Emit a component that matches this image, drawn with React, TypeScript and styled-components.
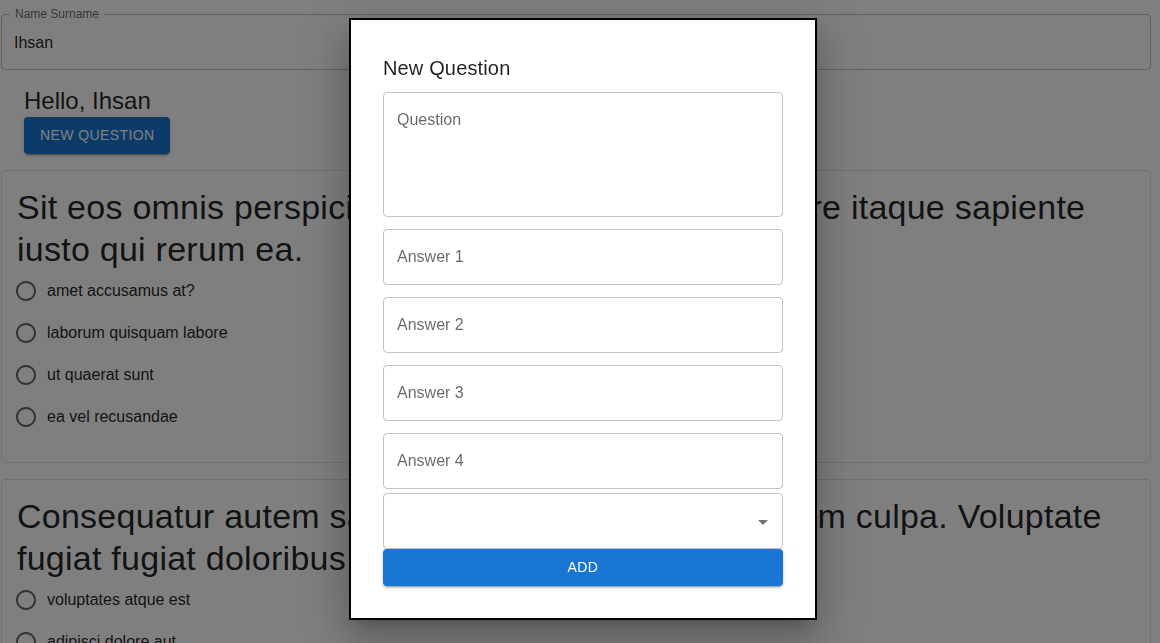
import React from "react";
import styled, { createGlobalStyle } from "styled-components";

const GlobalStyle = createGlobalStyle`
  html, body {
    margin: 0;
    padding: 0;
    background: #fff;
    overflow: hidden;
    font-family: "Liberation Sans", Arial, sans-serif;
    color: rgba(0, 0, 0, 0.87);
  }
  * { box-sizing: border-box; }
`;

const Page = styled.div`
  width: 1160px;
  padding: 0 9px 0 1px;
  display: flex;
  flex-direction: column;
`;

const NameField = styled.fieldset`
  margin: 8px 0 0 0;
  padding: 0 8px;
  border: 1px solid rgba(0, 0, 0, 0.23);
  border-radius: 4px;
  height: 62px;
  display: flex;
  flex-direction: column;
`;

const NameLegend = styled.legend`
  padding: 0 5px;
  font-size: 12px;
  line-height: 12px;
  color: rgba(0, 0, 0, 0.6);
`;

const NameValue = styled.div`
  padding: 10.5px 0 0 4px;
  font-size: 16px;
  line-height: 23px;
  color: rgba(0, 0, 0, 0.87);
`;

const Greeting = styled.div`
  padding: 15px 23px 16.5px;
  display: flex;
  flex-direction: column;
  align-items: flex-start;
`;

const Hello = styled.h5`
  margin: 0;
  font-size: 24px;
  font-weight: 400;
  line-height: 32px;
`;

const ContainedButton = styled.button<{ $full?: boolean }>`
  border: 0;
  border-radius: 4px;
  background: #1976d2;
  color: #fff;
  font-family: inherit;
  font-size: 14px;
  font-weight: 500;
  letter-spacing: 0.4px;
  text-transform: uppercase;
  line-height: 24.5px;
  padding: 6px 16px;
  width: ${(p) => (p.$full ? "100%" : "auto")};
  box-shadow: 0px 3px 1px -2px rgba(0, 0, 0, 0.2), 0px 2px 2px 0px rgba(0, 0, 0, 0.14),
    0px 1px 5px 0px rgba(0, 0, 0, 0.12);
  cursor: pointer;
`;

const Card = styled.div`
  border: 1px solid rgba(0, 0, 0, 0.12);
  border-radius: 4px;
  padding: 15px 15px 24px;
  margin-bottom: 16px;
`;

const CardTitle = styled.h4`
  margin: 0;
  font-size: 34px;
  font-weight: 400;
  line-height: 42px;
  letter-spacing: 0.25px;
`;

const RadioRow = styled.label`
  display: flex;
  align-items: center;
  height: 42px;
  margin-left: -12px;
`;

const RadioBox = styled.span`
  width: 42px;
  height: 42px;
  padding: 9px;
  display: flex;
  color: rgba(0, 0, 0, 0.6);
`;

const RadioLabel = styled.span`
  font-size: 16px;
  line-height: 24px;
`;

const Backdrop = styled.div`
  position: fixed;
  inset: 0;
  background: rgba(0, 0, 0, 0.5);
`;

const Dialog = styled.div`
  position: fixed;
  left: 349px;
  top: 18px;
  width: 468px;
  background: #fff;
  border: 2px solid #000;
  padding: 32px;
  box-shadow: 0px 11px 15px -7px rgba(0, 0, 0, 0.2), 0px 24px 38px 3px rgba(0, 0, 0, 0.14),
    0px 9px 46px 8px rgba(0, 0, 0, 0.12);
  display: flex;
  flex-direction: column;
`;

const DialogTitle = styled.h6`
  margin: 0 0 8px;
  font-size: 20px;
  font-weight: 400;
  line-height: 32px;
  letter-spacing: 0.15px;
`;

const Field = styled.div<{ $height: number; $gap: number }>`
  height: ${(p) => p.$height}px;
  margin-top: ${(p) => p.$gap}px;
  border: 1px solid rgba(0, 0, 0, 0.23);
  border-radius: 4px;
  padding: 14.5px 13px;
  display: flex;
  align-items: flex-start;
  justify-content: space-between;
`;

const FieldLabel = styled.span`
  font-size: 16px;
  line-height: 23px;
  color: rgba(0, 0, 0, 0.6);
`;

const SelectBody = styled.div`
  flex: 1;
  height: 23px;
`;

const ArrowIcon = styled.svg`
  width: 24px;
  height: 24px;
  margin: 1px -6px 0 0;
  fill: rgba(0, 0, 0, 0.54);
`;

const RadioIcon = () => (
  <svg width="24" height="24" viewBox="0 0 24 24" fill="currentColor">
    <path d="M12 2C6.48 2 2 6.48 2 12s4.48 10 10 10 10-4.48 10-10S17.52 2 12 2zm0 18c-4.42 0-8-3.58-8-8s3.58-8 8-8 8 3.58 8 8-3.58 8-8 8z" />
  </svg>
);

const questions = [
  {
    title: "Sit eos omnis perspiciatis quasi dolorem velit tempore itaque sapiente iusto qui rerum ea.",
    answers: ["amet accusamus at?", "laborum quisquam labore", "ut quaerat sunt", "ea vel recusandae"],
  },
  {
    title:
      "Consequatur autem sapiente ipsa ea dolore quisquam culpa. Voluptate fugiat fugiat doloribus eius.",
    answers: ["voluptates atque est", "adipisci dolore aut", "quia sit et", "nihil rem quod"],
  },
];

export default function App() {
  return (
    <>
      <GlobalStyle />
      <Page>
        <NameField>
          <NameLegend>Name Surname</NameLegend>
          <NameValue>Ihsan</NameValue>
        </NameField>
        <Greeting>
          <Hello>Hello, Ihsan</Hello>
          <ContainedButton>New Question</ContainedButton>
        </Greeting>
        {questions.map((q) => (
          <Card key={q.title}>
            <CardTitle>{q.title}</CardTitle>
            {q.answers.map((a) => (
              <RadioRow key={a}>
                <RadioBox>
                  <RadioIcon />
                </RadioBox>
                <RadioLabel>{a}</RadioLabel>
              </RadioRow>
            ))}
          </Card>
        ))}
      </Page>
      <Backdrop />
      <Dialog>
        <DialogTitle>New Question</DialogTitle>
        <Field $height={125} $gap={0}>
          <FieldLabel>Question</FieldLabel>
        </Field>
        {["Answer 1", "Answer 2", "Answer 3", "Answer 4"].map((l) => (
          <Field key={l} $height={56} $gap={12}>
            <FieldLabel>{l}</FieldLabel>
          </Field>
        ))}
        <Field $height={56} $gap={4}>
          <SelectBody />
          <ArrowIcon viewBox="0 0 24 24">
            <path d="M7 10l5 5 5-5z" />
          </ArrowIcon>
        </Field>
        <ContainedButton $full>Add</ContainedButton>
      </Dialog>
    </>
  );
}
